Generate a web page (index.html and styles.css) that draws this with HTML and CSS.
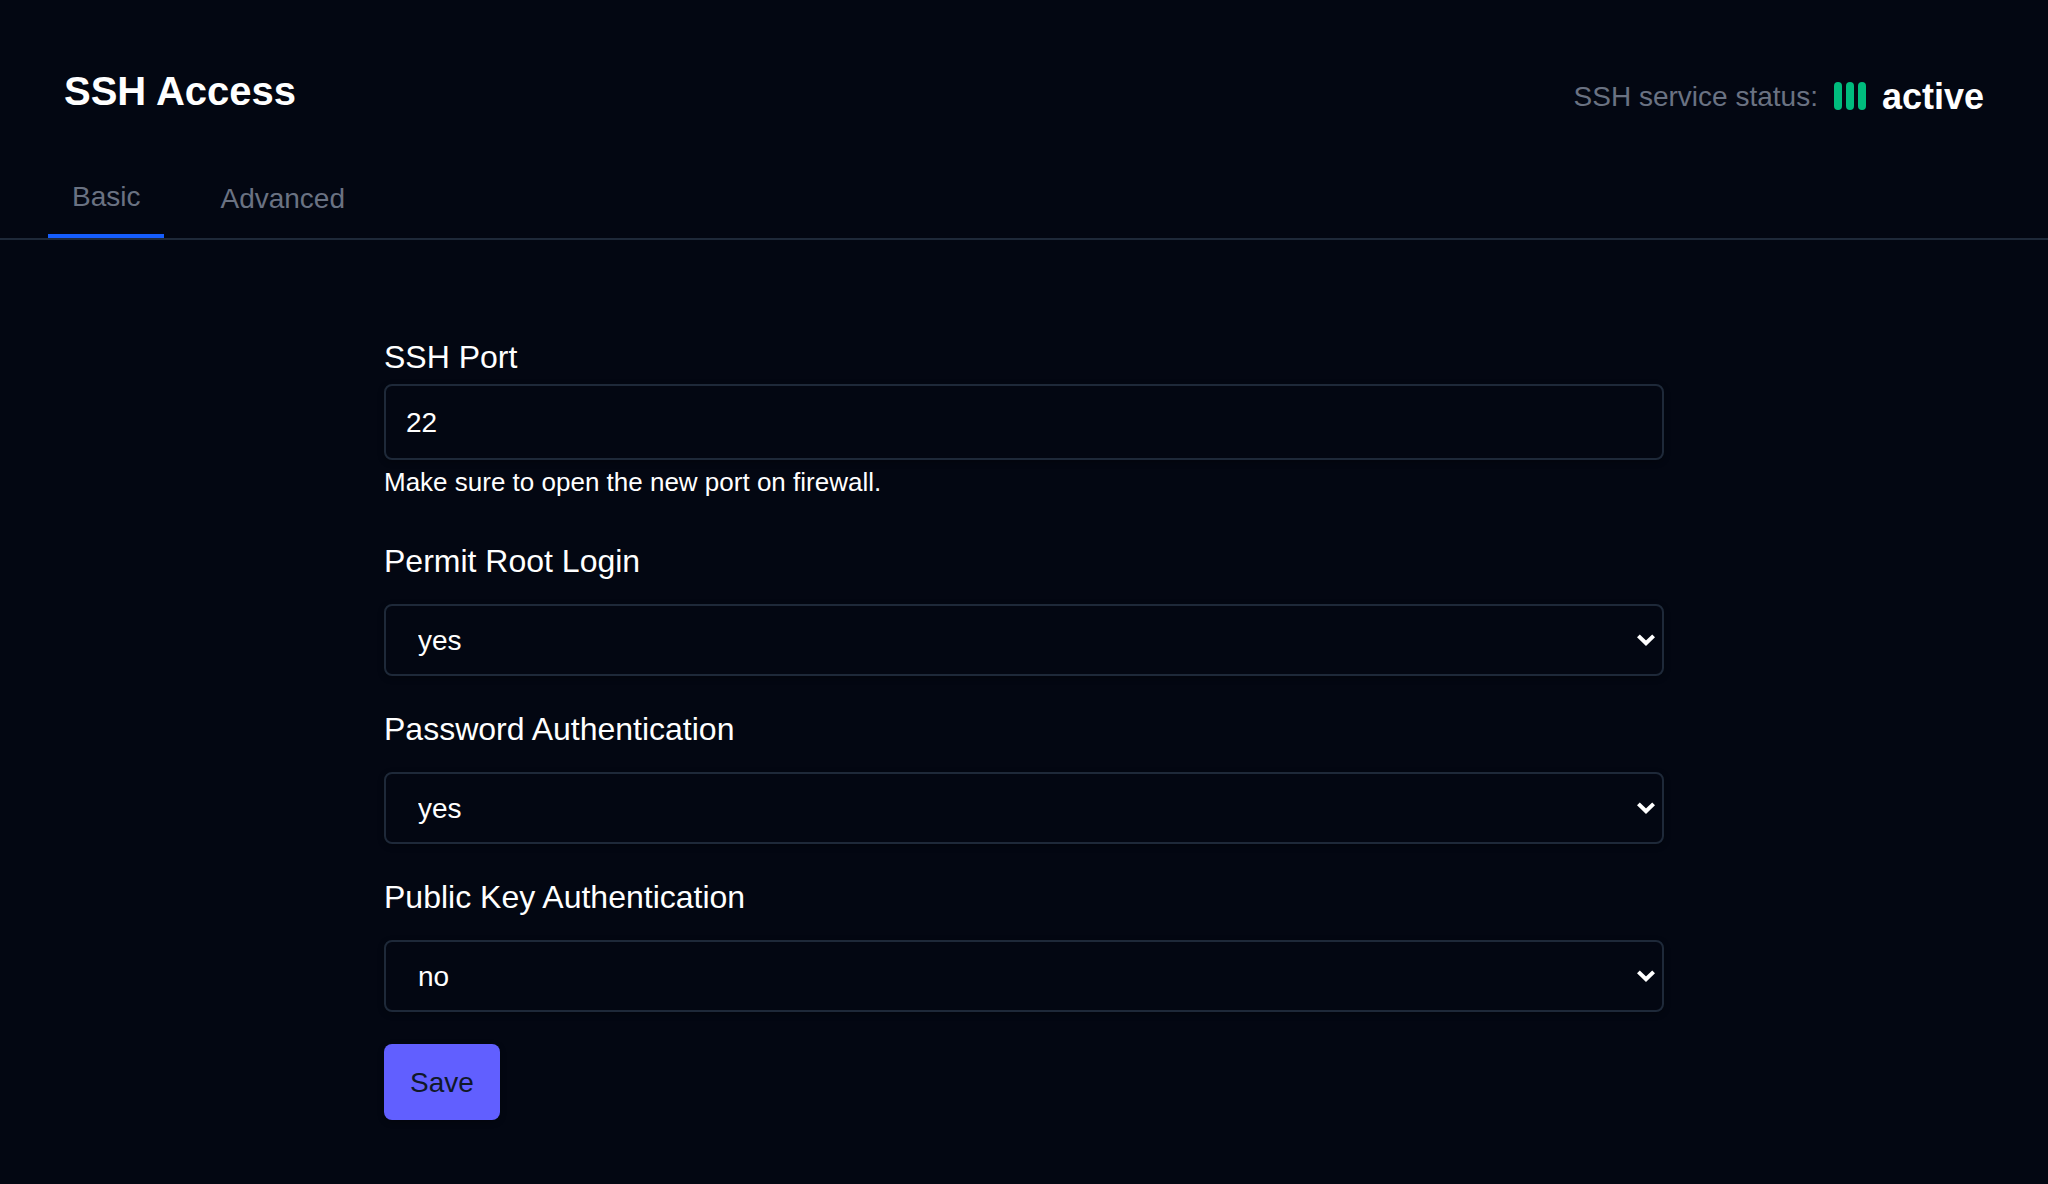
FILE: index.html
```html
<!DOCTYPE html>
<html lang="en">
<head>
    <title>SSH Access</title>
    <meta charset="utf-8">
    <meta name="viewport" content="width=device-width, initial-scale=1">
    <link rel="stylesheet" href="styles.css">
</head>
<body>
<header class="header">
    <h1 class="title">SSH Access</h1>
    <div class="status">
        <span class="status-label">SSH service status:</span>
        <span class="bars">
            <span class="bar"></span>
            <span class="bar"></span>
            <span class="bar"></span>
        </span>
        <strong class="status-value">active</strong>
    </div>
</header>

<nav class="tabs">
    <button class="tab active" type="button">Basic</button>
    <button class="tab" type="button">Advanced</button>
</nav>

<main>
    <form class="form">
        <div class="field port">
            <label for="port">SSH Port</label>
            <input id="port" type="text" value="22">
            <p class="hint">Make sure to open the new port on firewall.</p>
        </div>

        <div class="field">
            <label for="rootLogin">Permit Root Login</label>
            <div class="select">
                <select id="rootLogin">
                    <option selected>yes</option>
                    <option>no</option>
                </select>
                <svg class="arrow" viewBox="0 0 18 12" aria-hidden="true">
                    <path d="M1.4 1.9 L9 9.3 L16.6 1.9"/>
                </svg>
            </div>
        </div>

        <div class="field">
            <label for="passwordAuth">Password Authentication</label>
            <div class="select">
                <select id="passwordAuth">
                    <option selected>yes</option>
                    <option>no</option>
                </select>
                <svg class="arrow" viewBox="0 0 18 12" aria-hidden="true">
                    <path d="M1.4 1.9 L9 9.3 L16.6 1.9"/>
                </svg>
            </div>
        </div>

        <div class="field">
            <label for="publicKeyAuth">Public Key Authentication</label>
            <div class="select">
                <select id="publicKeyAuth">
                    <option>yes</option>
                    <option selected>no</option>
                </select>
                <svg class="arrow" viewBox="0 0 18 12" aria-hidden="true">
                    <path d="M1.4 1.9 L9 9.3 L16.6 1.9"/>
                </svg>
            </div>
        </div>

        <button class="save" type="button">Save</button>
    </form>
</main>
</body>
</html>
```
FILE: styles.css
```css
* {
    box-sizing: border-box;
}

body {
    margin: 0;
    background: #030712;
    color: white;
    font-family: "Liberation Sans", Arial, sans-serif;
    font-size: 28px;
    line-height: 40px;
}

input, select, button {
    font: inherit;
    color: inherit;
}

.header {
    display: flex;
    justify-content: space-between;
    padding: 64px 64px 0;
}

.title {
    margin: 0;
    font-size: 40px;
    line-height: 54px;
}

.status {
    display: flex;
    align-items: center;
    gap: 16px;
    min-height: 64px;
}

.status-label, .status-value {
    padding-top: 2px;
}

.status-label {
    color: #6a7282;
}

.status-value {
    font-size: 36px;
}

.bars {
    display: flex;
    gap: 4px;
}

.bar {
    width: 8px;
    height: 28px;
    border-radius: 4px;
    background: #00bc7d;
}

.tabs {
    display: flex;
    gap: 32px;
    margin-top: 30px;
    padding: 0 48px;
    border-bottom: 2px solid #1e2939;
}

.tab {
    min-height: 80px;
    padding: 2px 24px 0;
    border: 0;
    background: none;
    color: #6a7282;
    cursor: pointer;
}

.tab.active {
    border-bottom: 4px solid #155dfc;
}

.form {
    max-width: 1280px;
    margin: 0 auto;
    padding: 92px 0 64px;
}

.field {
    display: flex;
    flex-direction: column;
    gap: 18px;
    margin-bottom: 28px;
}

.field.port {
    gap: 2px;
    margin-bottom: 34px;
}

label {
    font-size: 32px;
    line-height: 50px;
}

.hint {
    margin: 0;
    font-size: 26px;
}

input, select {
    width: 100%;
    border: 2px solid #1e2939;
    border-radius: 8px;
    background: #030712;
    box-shadow: 0 2px 6px rgba(0, 0, 0, 0.3);
}

input {
    height: 76px;
    padding: 2px 20px 0;
}

select {
    appearance: none;
    grid-area: 1 / 1;
    height: 72px;
    padding: 2px 32px 0;
}

/* select and its arrow share one grid cell */
.select {
    display: grid;
    align-items: center;
}

.arrow {
    grid-area: 1 / 1;
    justify-self: end;
    width: 18px;
    height: 12px;
    margin-right: 9px;
    fill: none;
    stroke: white;
    stroke-width: 4;
    overflow: visible;
    pointer-events: none;
}

.save {
    display: block;
    height: 76px;
    margin-top: 32px;
    padding: 2px 26px 0;
    border: 0;
    border-radius: 8px;
    background: #615fff;
    color: #101828;
    box-shadow: 0 2px 6px rgba(0, 0, 0, 0.3);
    cursor: pointer;
}
```
